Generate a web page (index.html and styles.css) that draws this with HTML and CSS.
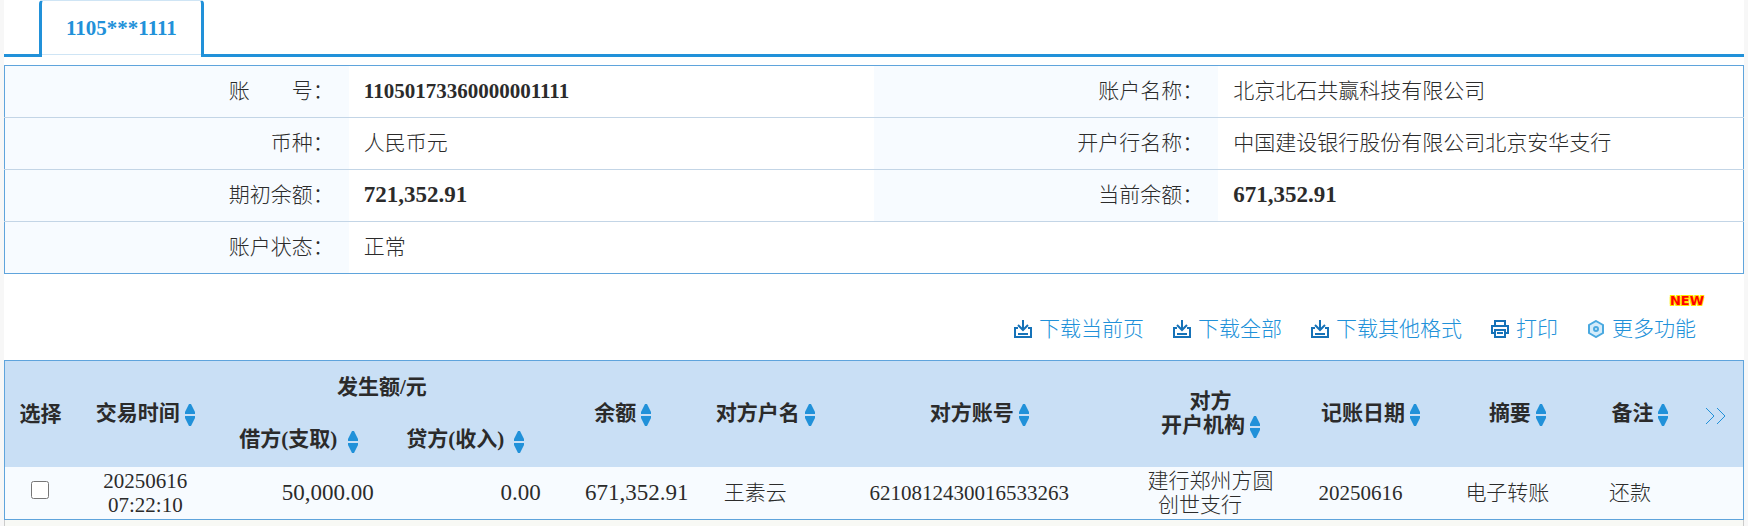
FILE: index.html
```
<!DOCTYPE html>
<html lang="zh-CN">
<head>
  <meta charset="UTF-8">
  <title>账户明细</title>
  <link rel="stylesheet" href="styles.css">
</head>
<body>
  <svg class="sprite" aria-hidden="true">
    <symbol id="sort" viewBox="0 0 10 22">
      <path d="M4 0 H6 L10 8 V10 H0 V8 Z M0 12 H10 V14 L6 22 H4 L0 14 Z"/>
    </symbol>
    <symbol id="download" viewBox="0 0 18 18">
      <path d="M9 0 V10 M4 5 L9 10 L14 5 M4 8 H1 V17 H17 V8 H14 M4 14 H14"/>
    </symbol>
  </svg>

  <div class="container">
    <nav class="tabs">
      <button type="button" class="tab">1105***1111</button>
    </nav>

    <table class="info">
      <colgroup>
        <col class="col-label">
        <col class="col-value">
        <col class="col-label">
        <col class="col-value">
      </colgroup>
      <tr>
        <th>账　　号：</th>
        <td><b>11050173360000001111</b></td>
        <th>账户名称：</th>
        <td>北京北石共赢科技有限公司</td>
      </tr>
      <tr>
        <th>币种：</th>
        <td>人民币元</td>
        <th>开户行名称：</th>
        <td>中国建设银行股份有限公司北京安华支行</td>
      </tr>
      <tr>
        <th>期初余额：</th>
        <td><b class="amount">721,352.91</b></td>
        <th>当前余额：</th>
        <td><b class="amount">671,352.91</b></td>
      </tr>
      <tr>
        <th>账户状态：</th>
        <td colspan="3">正常</td>
      </tr>
    </table>

    <div class="toolbar">
      <a href="#"><svg class="icon"><use href="#download"/></svg>下载当前页</a>
      <a href="#"><svg class="icon"><use href="#download"/></svg>下载全部</a>
      <a href="#"><svg class="icon"><use href="#download"/></svg>下载其他格式</a>
      <a href="#">
        <svg class="icon" viewBox="0 0 18 18">
          <path d="M4 5 V1 H14 V5 M4 13 H1 V6 H17 V13 H14 M4 10 H14 V17 H4 Z M6 13 H12"/>
        </svg>打印</a>
      <a href="#" class="more">
        <svg class="icon icon-more" viewBox="0 0 18 18">
          <path d="M9 1 L16 5 V13 L9 17 L2 13 V5 Z"/>
          <circle cx="9" cy="9" r="2"/>
        </svg>更多功能<span class="new">NEW</span></a>
    </div>

    <table class="detail">
      <colgroup>
        <col class="c-select">
        <col class="c-time">
        <col class="c-debit">
        <col class="c-credit">
        <col class="c-balance">
        <col class="c-name">
        <col class="c-account">
        <col class="c-branch">
        <col class="c-date">
        <col class="c-summary">
        <col class="c-note">
        <col class="c-next">
      </colgroup>
      <thead>
        <tr>
          <th rowspan="2">选择</th>
          <th rowspan="2">交易时间<svg class="sort"><use href="#sort"/></svg></th>
          <th colspan="2">发生额/元</th>
          <th rowspan="2">余额<svg class="sort"><use href="#sort"/></svg></th>
          <th rowspan="2">对方户名<svg class="sort"><use href="#sort"/></svg></th>
          <th rowspan="2">对方账号<svg class="sort"><use href="#sort"/></svg></th>
          <th rowspan="2">对方<br>开户机构<svg class="sort"><use href="#sort"/></svg></th>
          <th rowspan="2">记账日期<svg class="sort"><use href="#sort"/></svg></th>
          <th rowspan="2">摘要<svg class="sort"><use href="#sort"/></svg></th>
          <th rowspan="2">备注<svg class="sort"><use href="#sort"/></svg></th>
          <th rowspan="2">
            <a href="#" aria-label="下一页"><svg class="next" viewBox="0 0 22 18"><path d="M1 1 L9 9 L1 17 M12 1 L20 9 L12 17"/></svg></a>
          </th>
        </tr>
        <tr>
          <th>借方(支取) <svg class="sort"><use href="#sort"/></svg></th>
          <th>贷方(收入) <svg class="sort"><use href="#sort"/></svg></th>
        </tr>
      </thead>
      <tbody>
        <tr>
          <td class="pick"><input type="checkbox" class="check" aria-label="选择"></td>
          <td>20250616<br>07:22:10</td>
          <td class="amount">50,000.00</td>
          <td class="amount">0.00</td>
          <td class="amount">671,352.91</td>
          <td class="text">王素云</td>
          <td class="text">6210812430016533263</td>
          <td>建行郑州方圆<br>创世支行&emsp;</td>
          <td class="text">20250616</td>
          <td class="text">电子转账</td>
          <td class="text">还款</td>
          <td></td>
        </tr>
      </tbody>
    </table>
    <div class="rest"></div>
  </div>
</body>
</html>
```
FILE: styles.css
```
* {
  box-sizing: border-box;
}

html,
body {
  height: 100%;
}

body {
  margin: 0;
  padding: 0 4px;
  background-color: #f7f7f7;
  color: #2b2b2b;
  font-family: "Liberation Serif", "Noto Sans CJK SC", serif;
  font-size: 21px;
  font-weight: 300;
  line-height: 24px;
}

a {
  color: #2191d9;
  text-decoration: none;
}

b {
  font-weight: bold;
}

.sprite {
  display: none;
}

.container {
  display: flex;
  flex-direction: column;
  min-height: 100%;
  background-color: #fff;
}

/* tabs */
.tabs {
  display: flex;
  padding-left: 35px;
  border-bottom: 3px solid #2191d9;
  margin-bottom: 8px;
}

.tab {
  height: 57px;
  margin-bottom: -3px;
  padding: 0 24px 3px;
  border: 3px solid #2191d9;
  border-top: 1px solid #cfe5f5;
  border-bottom: 0;
  border-radius: 4px 4px 0 0;
  background: linear-gradient(#cfe5f5, #cfe5f5) 0 53px / 100% 1px no-repeat #fff;
  color: #2191d9;
  font: inherit;
  font-weight: bold;
}

/* account info */
table {
  width: 100%;
  table-layout: fixed;
  border-collapse: collapse;
}

.info {
  border: 1px solid #5fa4dc;
}

.info tr {
  height: 52px;
}

.info tr + tr {
  border-top: 1px solid #c3d5e6;
}

.info th {
  padding: 0 15px 1px 0;
  background-color: #f7fbff;
  font-weight: 300;
  text-align: right;
}

.info td {
  padding: 0 15px 1px;
}

.col-label {
  width: 19.8%;
}

.col-value {
  width: 30.2%;
}

.amount {
  font-size: 23px;
}

/* toolbar */
.toolbar {
  display: flex;
  justify-content: flex-end;
  gap: 29px;
  padding: 43px 48px 19px 0;
}

.toolbar a {
  display: flex;
  align-items: center;
  gap: 7px;
}

.icon {
  width: 18px;
  height: 18px;
  fill: none;
  stroke: #1572b8;
  stroke-width: 2;
}

.icon-more {
  fill: #d5ecfa;
  stroke: #4aa9e0;
}

.more {
  position: relative;
}

.new {
  position: absolute;
  top: -23px;
  right: -8px;
  color: #f00;
  font: bold 13px/14px "DejaVu Sans", sans-serif;
  text-shadow: 1px 1px #ffe600, -1px -1px #ffe600, 1px -1px #ffe600, -1px 1px #ffe600;
}

/* detail list */
.detail {
  border: 1px solid #5fa4dc;
}

.detail thead {
  background-color: #c9dff5;
}

.detail thead tr {
  height: 53px;
}

.detail th,
.detail td {
  padding: 0;
  text-align: center;
  white-space: nowrap;
}

.detail tbody tr {
  height: 53px;
  background-color: #f7fbff;
}

.detail .amount {
  padding-right: 8px;
  text-align: right;
}

.detail .text {
  padding-right: 20px;
}

.detail .pick {
  padding-bottom: 5px;
}

.sort {
  width: 10px;
  height: 22px;
  margin-left: 5px;
  fill: #2191d9;
  vertical-align: middle;
}

.next {
  width: 22px;
  height: 18px;
  fill: none;
  stroke: #2191d9;
  vertical-align: middle;
}

.check {
  display: block;
  width: 18px;
  height: 18px;
  margin: 0 auto;
}

.c-select { width: 4.1%; }
.c-time { width: 8%; }
.c-debit { width: 9.6%; }
.c-credit { width: 9.6%; }
.c-balance { width: 8.5%; }
.c-name { width: 7.9%; }
.c-account { width: 16.7%; }
.c-branch { width: 9.9%; }
.c-date { width: 8.5%; }
.c-summary { width: 8.4%; }
.c-note { width: 5.7%; }
.c-next { width: 3.1%; }

.rest {
  flex: 1;
  border: solid #ccc;
  border-width: 0 1px;
  background-color: #f8f9f5;
}
```
